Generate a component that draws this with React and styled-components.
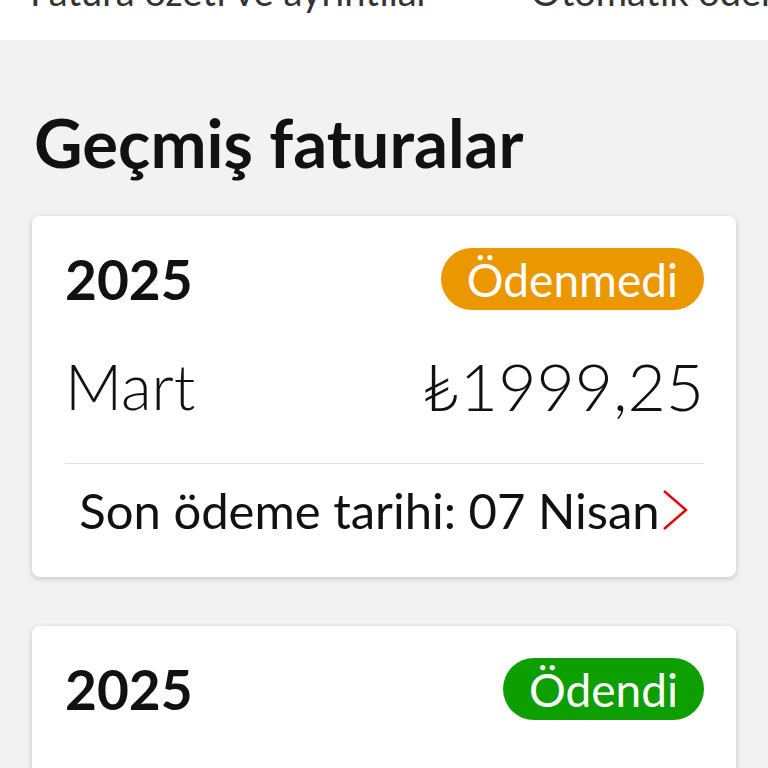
import styled, { createGlobalStyle } from 'styled-components'

const Global = createGlobalStyle`
body {
  margin: 0;
  background: #f2f2f2;
  font-family: Lato, "Noto Sans", sans-serif;
  color: #1a1a1a;
}
`
const Page = styled.div`
width: 768px;
height: 768px;
overflow: hidden;
background: #f2f2f2;
`
const TopBar = styled.div`
height: 40px;
background: #fff;
overflow: hidden;
display: flex;
gap: 100px;
padding-left: 30px;
`
const TopTab = styled.div`
font-size: 38px;
line-height: 38px;
margin-top: -28px;
white-space: nowrap;
color: #333;
`
const Content = styled.div`
padding: 65px 32px 0 32px;
display: flex;
flex-direction: column;
`
const Title = styled.h1`
margin: 0 0 37px 2px;
font-weight: 700;
font-size: 67px;
line-height: 74px;
letter-spacing: 0;
color: #111;
`
const Card = styled.div`
background: #fff;
border-radius: 8px;
box-shadow: 0 2px 6px rgba(0,0,0,0.18);
padding: 32px 32px 36px 33px;
margin-bottom: 49px;
`
const Row = styled.div`
display: flex;
justify-content: space-between;
align-items: center;
margin-top: ${props => props.gap || 0}px;
`
const Year = styled.div`
font-weight: 700;
font-size: 55px;
line-height: 62px;
color: #111;
`
const Badge = styled.div`
background: ${props => props.bg};
color: #fff;
border-radius: 31px;
height: 62px;
padding: 0 26px;
display: flex;
align-items: center;
font-size: 46px;
font-weight: 400;
`
const Month = styled.div`
font-size: 63px;
font-weight: 300;
color: #111;
`
const Amount = styled.div`
font-size: 66px;
font-weight: 300;
color: #111;
`
const Divider = styled.div`
height: 1px;
background: #e2e2e2;
margin: 38px 0 15px;
`
const DueRow = styled.div`
display: flex;
justify-content: center;
align-items: center;
font-size: 49px;
line-height: 62px;
color: #111;
`

const Chevron = () => (
  <svg width="30" height="42" viewBox="0 0 30 42">
    <path d="M4 2 L26 21 L4 40" fill="none" stroke="#e60000" strokeWidth="2.4" />
  </svg>
)

const App = () => {
  return (
    <Page>
      <Global />
      <TopBar>
        <TopTab>Fatura özeti ve ayrıntılar</TopTab>
        <TopTab>Otomatik ödeme talimatı</TopTab>
      </TopBar>
      <Content>
        <Title>Geçmiş faturalar</Title>
        <Card>
          <Row>
            <Year>2025</Year>
            <Badge bg="#eb9700">Ödenmedi</Badge>
          </Row>
          <Row gap={36}>
            <Month>Mart</Month>
            <Amount>₺1999,25</Amount>
          </Row>
          <Divider />
          <DueRow>
            Son ödeme tarihi: 07 Nisan
            <Chevron />
          </DueRow>
        </Card>
        <Card>
          <Row>
            <Year>2025</Year>
            <Badge bg="#0d9e00">Ödendi</Badge>
          </Row>
          <Row gap={36}>
            <Month>Mart</Month>
            <Amount>₺1999,25</Amount>
          </Row>
        </Card>
      </Content>
    </Page>
  )
}

export default App
